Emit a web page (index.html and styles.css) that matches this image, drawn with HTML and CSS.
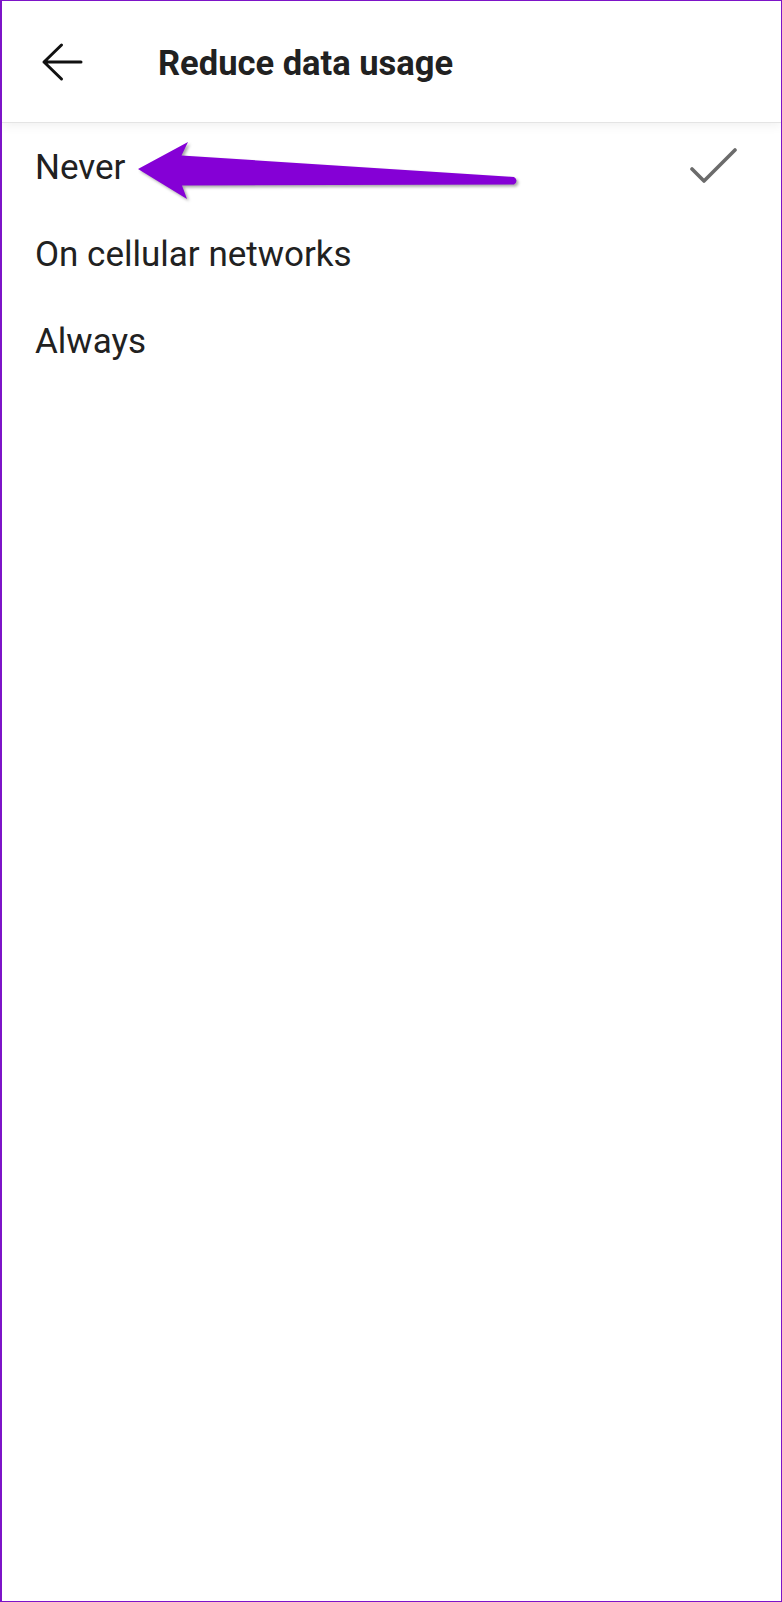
FILE: index.html
```html
<!DOCTYPE html>
<html lang="en">
<head>
<meta charset="utf-8">
<title>Reduce data usage</title>
<link rel="stylesheet" href="styles.css">
</head>
<body>
<div class="frame">
  <header class="toolbar">
    <button class="back" aria-label="Back">
      <svg width="44" height="40" viewBox="0 0 44 40"><path d="M41 20H4M21.5 3L4 20L21.5 37" fill="none" stroke="#111" stroke-width="3" stroke-linecap="round" stroke-linejoin="round"/></svg>
    </button>
    <h1 class="title">Reduce data usage</h1>
  </header>
  <ul class="options">
    <li class="option">
      <span class="label">Never</span>
      <svg class="check" width="48" height="40" viewBox="0 0 48 40"><path d="M3 22L15 34L46 3" fill="none" stroke="#6b6b6b" stroke-width="3.6" stroke-linecap="round" stroke-linejoin="round"/></svg>
    </li>
    <li class="option"><span class="label">On cellular networks</span></li>
    <li class="option"><span class="label">Always</span></li>
  </ul>
  <svg class="annotation" width="782" height="220" viewBox="0 0 782 220">
    <path d="M138 169L188 142L181.5 155.5L514 177Q519 180.5 514 184.5L182 185.5L187 199Z" fill="#8500d6"/>
  </svg>
</div>
</body>
</html>
```
FILE: styles.css
```css
html, body {
  margin: 0;
  padding: 0;
  background: #ffffff;
}
.frame {
  position: relative;
  width: 782px;
  height: 1602px;
  box-sizing: border-box;
  border: 1px solid #7d14c8;
  border-left-width: 2px;
  background: #ffffff;
  font-family: Roboto, "Noto Sans", sans-serif;
  color: #212121;
  overflow: hidden;
}
.toolbar {
  position: relative;
  z-index: 1;
  height: 121px;
  display: flex;
  align-items: center;
  background: #ffffff;
  border-bottom: 1px solid #e4e4e4;
  box-shadow: 0 3px 10px rgba(0, 0, 0, 0.06);
}
.back {
  margin-left: 38px;
  margin-top: 1px;
  width: 44px;
  height: 40px;
  padding: 0;
  border: 0;
  background: none;
  display: flex;
}
.title {
  margin: 2px 0 0 74px;
  font-size: 34.5px;
  font-weight: 700;
  color: #212121;
  letter-spacing: 0;
}
.options {
  list-style: none;
  margin: 0;
  padding: 1px 0 0;
}
.option {
  height: 87px;
  display: flex;
  align-items: center;
  justify-content: space-between;
  padding: 0 44px 0 33px;
}
.label {
  font-size: 35px;
  font-weight: 400;
  color: #212121;
}
.check {
  margin-top: -1px;
}
.annotation {
  position: absolute;
  left: -2px;
  top: -1px;
  z-index: 2;
  filter: drop-shadow(2px 2px 1.5px rgba(0, 0, 0, 0.35));
  pointer-events: none;
}
```
